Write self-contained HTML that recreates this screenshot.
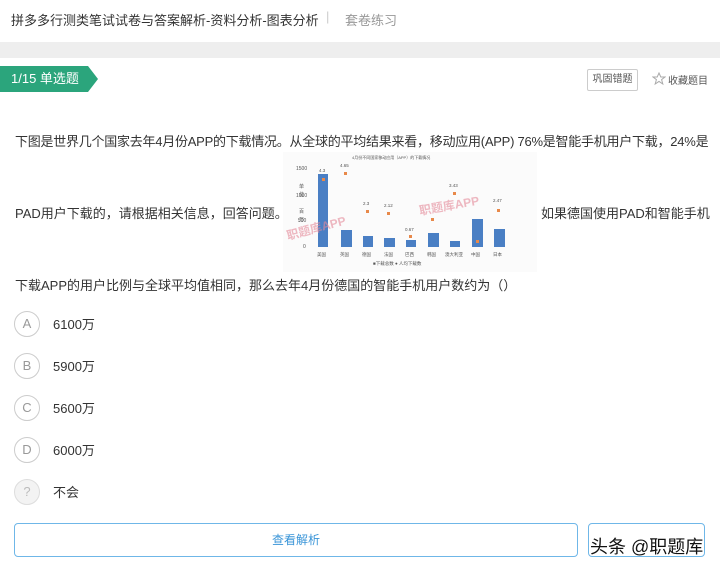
<!DOCTYPE html>
<html><head><meta charset="utf-8"><style>
body{margin:0;width:720px;height:571px;background:#fff;font-family:"Liberation Sans","Noto Sans CJK SC",sans-serif;position:relative;overflow:hidden;color:#333}
.a{position:absolute;white-space:nowrap}
.circ{position:absolute;left:14px;width:24px;height:24px;border:1px solid #ccc;border-radius:50%;text-align:center;line-height:24px;font-size:13px;color:#999}
.opt{position:absolute;left:53px;font-size:13px;color:#333}
.q{position:absolute;left:15px;font-size:13px;color:#333;white-space:nowrap}
</style></head><body>
<div class="a" style="left:11px;top:10px;font-size:13px;color:#333">拼多多行测类笔试试卷与答案解析-资料分析-图表分析</div>
<div class="a" style="left:326px;top:9px;font-size:13px;color:#ccc">|</div>
<div class="a" style="left:345px;top:10px;font-size:13px;color:#999">套卷练习</div>
<div class="a" style="left:0;top:42px;width:720px;height:16px;background:#eeeeee"></div>
<div class="a" style="left:0;top:66px;width:88px;height:26px;background:#2ba57c;color:#fff;font-size:13px;line-height:26px;padding-left:11px;box-sizing:border-box">1/15 单选题</div>
<div class="a" style="left:88px;top:66px;width:0;height:0;border-top:13px solid transparent;border-bottom:13px solid transparent;border-left:10px solid #2ba57c"></div>
<div class="a" style="left:587px;top:69px;width:49px;height:20px;border:1px solid #ccc;border-radius:2px;font-size:10px;line-height:20px;text-align:center;color:#555">巩固错题</div>
<svg class="a" style="left:652px;top:72px" width="14" height="14" viewBox="0 0 14 14"><path d="M7 1L8.8 5H13L9.6 7.6L10.8 12L7 9.4L3.2 12L4.4 7.6L1 5H5.2Z" fill="none" stroke="#aaa" stroke-width="1"/></svg>
<div class="a" style="left:668px;top:72px;font-size:10px;color:#555">收藏题目</div>
<div class="q" style="top:131px;letter-spacing:-0.25px">下图是世界几个国家去年4月份APP的下载情况。从全球的平均结果来看，移动应用(APP) 76%是智能手机用户下载，24%是</div>
<div class="q" style="top:203px">PAD用户下载的，请根据相关信息，回答问题。</div>
<div class="q" style="left:541px;top:203px">如果德国使用PAD和智能手机</div>
<div class="q" style="top:275px">下载APP的用户比例与全球平均值相同，那么去年4月份德国的智能手机用户数约为（）</div>
<svg class="a" style="left:283px;top:152px" width="254" height="120" viewBox="283 152 254 120">
<rect x="283" y="152" width="254" height="120" fill="#fbfbfb"/>
<text x="352" y="159" font-size="4" fill="#555">4月份不同国家移动应用（APP）的下载情况</text>
<g font-size="5" fill="#555"><text x="296" y="170">1500</text><text x="296" y="197">1000</text><text x="298" y="222">500</text><text x="303" y="248">0</text><text x="299" y="188">单</text><text x="299" y="196">位</text><text x="299" y="213">百</text><text x="299" y="221">万</text></g>
<g fill="#4a7fc4"><rect x="318" y="174" width="10" height="73"/><rect x="341" y="230" width="11" height="17"/><rect x="363" y="236" width="10" height="11"/><rect x="384" y="238" width="11" height="9"/><rect x="406" y="240" width="10" height="7"/><rect x="428" y="233" width="11" height="14"/><rect x="450" y="241" width="10" height="6"/><rect x="472" y="219" width="11" height="28"/><rect x="494" y="229" width="11" height="18"/></g>
<g fill="#e8894a"><rect x="322" y="178" width="3" height="3"/><rect x="344" y="172" width="3" height="3"/><rect x="366" y="210" width="3" height="3"/><rect x="387" y="212" width="3" height="3"/><rect x="409" y="235" width="3" height="3"/><rect x="431" y="218" width="3" height="3"/><rect x="453" y="192" width="3" height="3"/><rect x="476" y="240" width="3" height="3"/><rect x="497" y="209" width="3" height="3"/></g>
<g font-size="4.5" fill="#555"><text x="319" y="172">4.3</text><text x="340" y="167">4.65</text><text x="363" y="205">2.3</text><text x="384" y="207">2.12</text><text x="405" y="231">0.67</text><text x="449" y="187">3.43</text><text x="493" y="202">2.47</text>
<text x="317" y="256">美国</text><text x="340" y="256">英国</text><text x="362" y="256">德国</text><text x="384" y="256">法国</text><text x="405" y="256">巴西</text><text x="427" y="256">韩国</text><text x="445" y="256">澳大利亚</text><text x="471" y="256">中国</text><text x="493" y="256">日本</text>
<text x="373" y="265">■下载总数  ● 人均下载数</text></g>
<g font-size="12" fill="#e58a9a" opacity="0.6" font-weight="bold"><text x="288" y="240" transform="rotate(-15 288 240)">职题库APP</text><text x="420" y="215" transform="rotate(-10 420 215)">职题库APP</text></g>
</svg>
<div class="circ" style="top:311px">A</div><div class="opt" style="top:314px">6100万</div>
<div class="circ" style="top:353px">B</div><div class="opt" style="top:356px">5900万</div>
<div class="circ" style="top:395px">C</div><div class="opt" style="top:398px">5600万</div>
<div class="circ" style="top:437px">D</div><div class="opt" style="top:440px">6000万</div>
<div class="circ" style="top:479px;background:#f3f3f3;border-color:#ddd;color:#bbb">?</div><div class="opt" style="top:482px">不会</div>
<div class="a" style="left:14px;top:523px;width:562px;height:32px;border:1px solid #6fb7e8;border-radius:4px;text-align:center;line-height:32px;font-size:12px;color:#3a95d8">查看解析</div>
<div class="a" style="left:588px;top:523px;width:115px;height:32px;border:1px solid #6fb7e8;border-radius:4px"></div>
<div class="a" style="left:590px;top:533px;font-size:18px;color:#111">头条 @职题库</div>
</body></html>
